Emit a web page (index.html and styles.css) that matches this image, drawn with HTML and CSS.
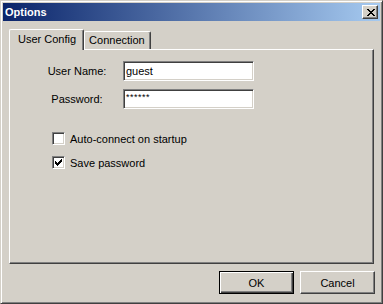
FILE: index.html
```html
<!DOCTYPE html>
<html lang="en">
<head>
    <meta charset="UTF-8">
    <title>Options</title>
    <link rel="stylesheet" href="styles.css">
</head>
<body>

    <!-- Окно настроек -->
    <div class="window">
        <div class="titlebar">
            <span class="title">Options</span>
            <button class="close" type="button">
                <svg width="8" height="7" viewBox="0 0 8 7" shape-rendering="crispEdges">
                    <path d="M0 0h2v1h-2z M6 0h2v1h-2z M1 1h2v1h-2z M5 1h2v1h-2z M2 2h4v1h-4z M3 3h2v1h-2z M2 4h4v1h-4z M1 5h2v1h-2z M5 5h2v1h-2z M0 6h2v1h-2z M6 6h2v1h-2z" fill="#000"/>
                </svg>
            </button>
        </div>

        <div class="content">
            <div class="tabs">
                <div class="tab active">User Config</div>
                <div class="tab">Connection</div>
            </div>

            <div class="panel">
                <div class="form-row">
                    <label class="field-label">User Name:</label>
                    <div class="field">guest</div>
                </div>
                <div class="form-row">
                    <label class="field-label">Password:</label>
                    <div class="field secret">******</div>
                </div>

                <div class="checks">
                    <div class="check-row">
                        <span class="checkbox"></span>
                        <span>Auto-connect on startup</span>
                    </div>
                    <div class="check-row">
                        <span class="checkbox">
                            <svg width="7" height="7" viewBox="0 0 7 7" shape-rendering="crispEdges">
                                <path d="M6 0h1v1h-1z M5 1h2v1h-2z M0 2h1v1h-1z M4 2h3v1h-3z M0 3h2v1h-2z M3 3h3v1h-3z M0 4h5v1h-5z M1 5h3v1h-3z M2 6h1v1h-1z" fill="#000"/>
                            </svg>
                        </span>
                        <span>Save password</span>
                    </div>
                </div>
            </div>

            <div class="buttons">
                <button class="btn default" type="button">OK</button>
                <button class="btn" type="button">Cancel</button>
            </div>
        </div>
    </div>

</body>
</html>
```

FILE: styles.css
```css
* {
    box-sizing: border-box;
    margin: 0;
    padding: 0;
}

body {
    font-family: 'Liberation Sans', Arial, sans-serif;
    font-size: 11px;
    color: #000;
    background-color: #d4d0c8;
}

/* Рамка окна */
.window {
    width: 383px;
    height: 304px;
    background-color: #d4d0c8;
    border: 1px solid;
    border-color: #d4d0c8 #404040 #404040 #d4d0c8;
    box-shadow: inset 1px 1px #fff, inset -1px -1px #808080;
    padding: 2px;
    display: flex;
    flex-direction: column;
}

/* Заголовок */
.titlebar {
    height: 18px;
    background: linear-gradient(to right, #0a246a, #a6caf0);
    display: flex;
    align-items: center;
    justify-content: space-between;
    padding: 0 2px 0 2px;
}

.title {
    color: #fff;
    font-weight: bold;
    font-size: 11px;
}

.close {
    width: 16px;
    height: 14px;
    background-color: #d4d0c8;
    border: 1px solid;
    border-color: #fff #404040 #404040 #fff;
    box-shadow: inset -1px -1px #808080;
    display: flex;
    align-items: center;
    justify-content: center;
    padding-left: 1px;
}

.close svg {
    display: block;
}

/* Содержимое */
.content {
    flex: 1;
    display: flex;
    flex-direction: column;
    padding: 8px 6px 7px 6px;
}

.tabs {
    height: 20px;
    display: flex;
    align-items: flex-end;
}

.tab {
    height: 18px;
    line-height: 16px;
    padding: 0 5px 0 4px;
    border-top: 1px solid #fff;
    border-left: 1px solid #fff;
    border-right: 1px solid #404040;
    box-shadow: inset -1px 0 #808080;
    border-radius: 2px 2px 0 0;
    background-color: #d4d0c8;
    white-space: nowrap;
}

.tab.active {
    height: 21px;
    line-height: 18px;
    padding: 0 7px 0 8px;
    margin-bottom: -1px;
    position: relative;
    z-index: 1;
}

.panel {
    height: 215px;
    border: 1px solid;
    border-color: #fff #404040 #404040 #fff;
    box-shadow: inset -1px -1px #808080;
    padding-top: 11px;
}

.form-row {
    display: flex;
    align-items: center;
    height: 20px;
    padding-left: 30px;
}

.form-row + .form-row {
    margin-top: 8px;
}

.field-label {
    width: 74px;
    text-align: center;
    margin-right: 9px;
}

.field {
    width: 131px;
    height: 20px;
    background-color: #fff;
    border: 1px solid;
    border-color: #808080 #fff #fff #808080;
    box-shadow: inset 1px 1px #404040, inset -1px -1px #d4d0c8;
    padding-left: 2px;
    line-height: 18px;
}

.field.secret {
    font-size: 9px;
    line-height: 14px;
    letter-spacing: 0.5px;
}

.checks {
    margin-top: 23px;
    padding-left: 42px;
}

.check-row {
    display: flex;
    align-items: center;
    height: 13px;
}

.check-row + .check-row {
    margin-top: 11px;
}

.checkbox {
    width: 13px;
    height: 13px;
    background-color: #fff;
    border: 1px solid;
    border-color: #808080 #fff #fff #808080;
    box-shadow: inset 1px 1px #404040, inset -1px -1px #d4d0c8;
    margin-right: 5px;
    display: flex;
    align-items: center;
    justify-content: center;
}

.checkbox svg {
    display: block;
}

/* Кнопки */
.buttons {
    display: flex;
    justify-content: flex-end;
    gap: 6px;
    margin-top: 7px;
    margin-right: -1px;
}

.btn {
    width: 75px;
    height: 23px;
    font-family: 'Liberation Sans', Arial, sans-serif;
    font-size: 11px;
    color: #000;
    background-color: #d4d0c8;
    border: 1px solid;
    border-color: #fff #404040 #404040 #fff;
    box-shadow: inset -1px -1px #808080;
}

.btn.default {
    border: 1px solid #000;
    box-shadow: inset 1px 1px #fff, inset -1px -1px #404040, inset -2px -2px #808080;
}
```
